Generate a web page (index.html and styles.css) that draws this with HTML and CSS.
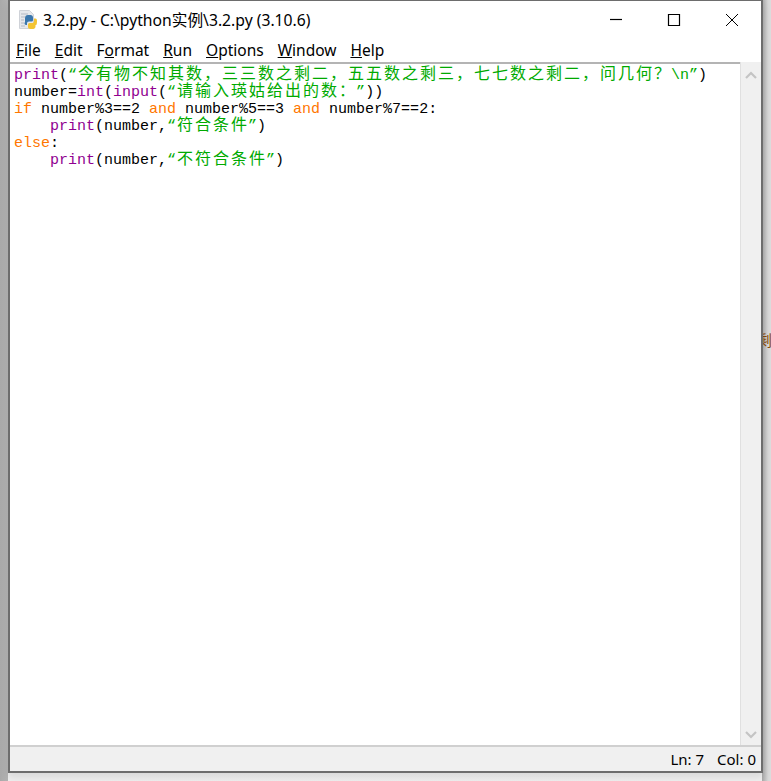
FILE: index.html
```html
<!DOCTYPE html>
<html lang="zh-CN">
<head>
<meta charset="utf-8">
<title>3.2.py</title>
<link rel="stylesheet" href="styles.css">
</head>
<body>
<div class="behind"><span class="peek">剩</span></div>
<div class="window">
  <header class="titlebar">
    <svg class="app-icon" width="20" height="20" viewBox="0 0 20 20">
      <path d="M.5.500h10l4 4v14H.5z" fill="#e6e8ec" stroke="#cfd2d8"/>
      <path d="M2 4h7M2 7h4M2 10h3M2 13h3M2 16h4" stroke="#b4b9c4"/>
      <path d="M6 12V8.500C6 6 7 5 9 5h2.500C13 5 14 6 14 7.500V10c0 1-.8 1.500-1.600 1.500H10c-1.200 0-2 .8-2 2V15H7c-1 0-1.500-1-1.500-2z" fill="#3b77ad"/>
      <path d="M18 11c0-1.200-.4-2.500-1.500-2.500H15V11c0 1.500-1 2-2 2h-2.500C9.500 13 9 13.800 9 14.500V17c0 1.200 1 2 2.500 2H14c1.500 0 2.500-1 2.500-2.500V15H17c.7 0 1-1.500 1-4z" fill="#f3c433"/>
    </svg>
    <span class="title">3.2.py - C:\python实例\3.2.py (3.10.6)</span>
    <div class="controls">
      <svg class="ctl" width="58" height="14" viewBox="0 0 58 14"><path d="M23 6.500h12" stroke="#000" stroke-width="1.200"/></svg>
      <svg class="ctl" width="58" height="14" viewBox="0 0 58 14"><path d="M23.500 1.500h11v11h-11z" fill="none" stroke="#000" stroke-width="1.200"/></svg>
      <svg class="ctl" width="58" height="14" viewBox="0 0 58 14"><path d="M23 1l12 12M35 1L23 13" stroke="#000" fill="none"/></svg>
    </div>
  </header>
  <nav class="menubar">
    <span><u>F</u>ile</span><span><u>E</u>dit</span><span>F<u>o</u>rmat</span><span><u>R</u>un</span><span><u>O</u>ptions</span><span><u>W</u>indow</span><span><u>H</u>elp</span>
  </nav>
  <main class="editor">
    <pre class="code"><span class="bi">print</span>(<span class="st">“<span class="cjk">今有物不知其数，三三数之剩二，五五数之剩三，七七数之剩二，问几何？</span>\n”</span>)
number=<span class="bi">int</span>(<span class="bi">input</span>(<span class="st">“<span class="cjk">请输入瑛姑给出的数：</span>”</span>))
<span class="kw">if</span> number%3==2 <span class="kw">and</span> number%5==3 <span class="kw">and</span> number%7==2:
    <span class="bi">print</span>(number,<span class="st">“<span class="cjk">符合条件</span>”</span>)
<span class="kw">else</span>:
    <span class="bi">print</span>(number,<span class="st">“<span class="cjk">不符合条件</span>”</span>)</pre>
    <aside class="scrollbar">
      <svg width="12" height="8" viewBox="0 0 12 8"><path d="M1 7l5-5 5 5" fill="none" stroke="#c4c4c4" stroke-width="2.200"/></svg>
      <svg width="12" height="8" viewBox="0 0 12 8"><path d="M1 1l5 5 5-5" fill="none" stroke="#c4c4c4" stroke-width="2.200"/></svg>
    </aside>
  </main>
  <footer class="status"><span>Ln: 7</span><span>Col: 0</span></footer>
</div>
</body>
</html>
```
FILE: styles.css
```css
html, body { margin: 0; padding: 0; }
body {
  width: 771px;
  height: 781px;
  overflow: hidden;
  position: relative;
  background: linear-gradient(to right, #a9a9a9 0, #b4b4b4 8px, #efefef 8px, #f0f0f0 762px, #a8a8a8 762px, #d6d6d6 768px, #dcdcdc 771px);
  font-family: "Segoe UI", "Noto Sans", "Open Sans", "Noto Sans CJK SC", sans-serif;
  color: #000;
}
.behind { position: absolute; inset: 0; }
.peek {
  position: absolute;
  left: 757px;
  top: 329px;
  font: 15px "Noto Sans CJK SC", sans-serif;
  color: #8a4a08;
}
.window {
  position: relative;
  margin-left: 8px;
  width: 755px;
  height: 773px;
  box-sizing: border-box;
  border: 1px solid #6d6d6d;
  border-width: 1px 2px 2px 2px;
  background: #fff;
  display: flex;
  flex-direction: column;
  box-shadow: 0 4px 8px rgba(0,0,0,.1);
}
.titlebar {
  height: 37px;
  display: flex;
  align-items: center;
  padding-left: 9px;
  flex: none;
}
.app-icon { flex: none; margin-right: 4px; }
.title { font-size: 15.7px; white-space: nowrap; }
.controls { margin-left: auto; display: flex; }
.ctl { display: block; }
.menubar {
  height: 24px;
  flex: none;
  display: flex;
  gap: 14px;
  padding-left: 6px;
  align-items: center;
  font-size: 15.5px;
  box-sizing: border-box;
}
.editor { flex: 1; min-height: 0; display: flex; }
.code {
  flex: 1;
  margin: 0;
  padding: 3px 0 0 4px;
  border-top: 2px solid #b4b4b4;
  font: 15px/17px "Liberation Mono", "Noto Sans CJK SC", monospace;
  color: #000;
}
.cjk {
  letter-spacing: 2px;
  font-size: 16px;
  line-height: 0;
  margin-left: 1px;
  margin-right: -1px;
  text-spacing-trim: space-all;
  font-family: "Noto Sans CJK SC", sans-serif;
}
.bi { color: #900090; }
.kw { color: #ff7700; }
.st { color: #00aa00; }
.scrollbar {
  flex: none;
  width: 20px;
  background: #f0f0f0;
  border-left: 1px solid #e0e0e0;
  display: flex;
  flex-direction: column;
  justify-content: space-between;
  align-items: center;
  padding: 9px 0 6px;
}
.scrollbar svg { display: block; }
.status {
  flex: none;
  height: 26px;
  background: #f0f0f0;
  border-top: 2px solid #d0d0d0;
  box-sizing: border-box;
  display: flex;
  justify-content: flex-end;
  align-items: center;
  gap: 13px;
  padding-right: 5px;
  font-size: 15px;
}
```
